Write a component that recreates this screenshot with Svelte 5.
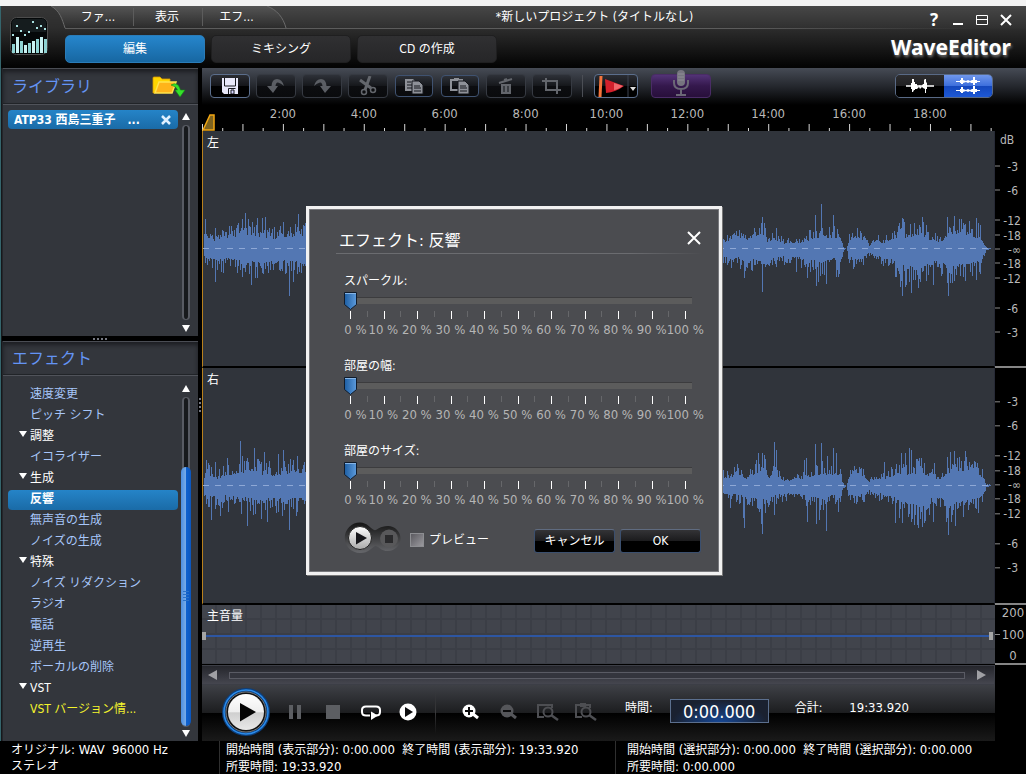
<script>
  const effects = [
    { name: '速度変更' },
    { name: 'ピッチ シフト' },
    { name: '調整', group: true },
    { name: 'イコライザー' },
    { name: '生成', group: true },
    { name: '反響', selected: true },
    { name: '無声音の生成' },
    { name: 'ノイズの生成' },
    { name: '特殊', group: true },
    { name: 'ノイズ リダクション' },
    { name: 'ラジオ' },
    { name: '電話' },
    { name: '逆再生' },
    { name: 'ボーカルの削除' },
    { name: 'VST', group: true },
    { name: 'VST バージョン情...', notice: true }
  ];

  const sliders = [
    { id: 'sparkle', name: 'スパークル:' },
    { id: 'width', name: '部屋の幅:' },
    { id: 'size', name: '部屋のサイズ:' }
  ];
  let values = $state([0, 0, 0]);
  let preview = $state(false);
  const steps = Array.from({ length: 11 }, (_, i) => i * 10);
  const sliderTicks = Array.from({ length: 21 }, (_, i) => i);

  const minute = 5.1;
  const rulerTicks = Array.from({ length: 40 }, (_, i) => i);
  const rulerLabels = [2, 4, 6, 8, 10, 12, 14, 16, 18];

  const db = [
    ['-3', -83], ['-6', -59], ['-12', -29], ['-18', -14], ['-∞', 0],
    ['-18', 14], ['-12', 29], ['-6', 59], ['-3', 83]
  ];
  const gap = '  ';
  const open = ' (';

  // Envelope points: [x, peak above centre, peak below centre]
  const envelope = [
    [0, 10, 8], [4, 15, 14], [10, 12, 13], [14, 9, 16], [22, 14, 13], [34, 15, 15], [44, 19, 16], [56, 16, 19],
    [68, 13, 17], [80, 15, 16], [100, 17, 17], [300, 15, 16], [518, 9, 8], [524, 10, 12], [536, 15, 12],
    [544, 9, 15], [552, 15, 14], [560, 21, 18], [565, 9, 20], [572, 13, 12], [582, 7, 10], [600, 8, 12],
    [612, 14, 16], [622, 16, 18], [630, 12, 12], [637, 15, 16], [641, 2, 2], [644, 0, 0], [647, 10, 10],
    [654, 15, 15], [664, 9, 9], [667, 4, 5], [674, 9, 9], [683, 8, 11], [690, 13, 14], [698, 16, 22],
    [706, 14, 24], [718, 18, 28], [728, 11, 18], [738, 9, 16], [746, 17, 26], [756, 20, 22], [764, 18, 21],
    [772, 15, 18], [778, 14, 16], [781, 8, 8], [784, 1, 1], [789, 1, 0]
  ];
  const leftUp = {
    2: 30, 12: 21, 28: 23, 35: 26, 39: 30, 42: 36, 46: 23, 49: 27, 54: 31, 59: 31, 62: 32, 66: 21, 71: 22, 80: 27, 87: 22, 92: 25, 95: 35,
    557: 21, 559: 26, 560: 32, 574: 21, 613: 34, 619: 45, 631: 34, 632: 23, 635: 20, 697: 26, 700: 31, 701: 30, 702: 27, 708: 25, 712: 26, 720: 32, 721: 27, 724: 24, 745: 32, 752: 33, 757: 30, 759: 30, 763: 25, 774: 31, 776: 26, 778: 24
  };
  const leftDown = {
    12: 33, 20: 24, 34: 24, 39: 28, 42: 23, 48: 36, 52: 29, 54: 29, 60: 25, 65: 24, 70: 21, 76: 21, 83: 24, 86: 47, 90: 33, 94: 25,
    529: 19, 542: 29, 543: 22, 560: 43, 574: 18, 594: 23, 605: 29, 614: 37, 616: 33, 624: 35, 634: 28, 636: 28, 652: 18, 693: 28, 698: 38, 700: 47, 703: 38, 709: 44, 718: 33, 724: 32, 731: 36, 746: 47, 752: 32, 761: 28, 763: 32, 774: 31, 778: 25
  };
  const rightUp = {
    3: 26, 12: 24, 24: 28, 37: 45, 39: 30, 44: 28, 51: 38, 55: 27, 61: 34, 66: 25, 75: 32, 80: 36, 87: 27, 94: 30,
    556: 33, 560: 33, 562: 31, 563: 27, 572: 44, 574: 36, 602: 26, 604: 28, 613: 42, 619: 43, 625: 30, 631: 38, 634: 33, 651: 15, 682: 24, 699: 33, 703: 33, 707: 38, 709: 36, 717: 28, 732: 23, 745: 29, 748: 34, 752: 35, 757: 29, 763: 35, 772: 25, 780: 17
  };
  const rightDown = {
    8: 34, 17: 30, 25: 26, 38: 28, 44: 40, 50: 29, 58: 33, 64: 36, 73: 27, 79: 30, 86: 44, 93: 30,
    528: 22, 541: 32, 542: 42, 559: 38, 560: 48, 563: 27, 572: 29, 605: 36, 614: 38, 617: 34, 624: 45, 636: 26, 652: 17, 693: 37, 700: 37, 709: 36, 712: 39, 718: 33, 731: 36, 744: 36, 746: 49, 753: 40, 761: 31, 774: 23
  };

  function buildWave(seed, up, down) {
    let state = seed;
    const random = () => {
      state = (state * 1103515245 + 12345) % 2147483648;
      return state / 2147483648;
    };
    let path = '';
    let k = 0;
    for (let x = 1; x < 789; x++) {
      while (k < envelope.length - 2 && envelope[k + 1][0] <= x) k++;
      const [x0, u0, d0] = envelope[k];
      const [x1, u1, d1] = envelope[k + 1];
      const t = (x - x0) / (x1 - x0);
      const u = up[x] ?? Math.round((u0 + (u1 - u0) * t) * (0.75 + random() ** 2 * 0.9));
      const d = down[x] ?? Math.round((d0 + (d1 - d0) * t) * (0.7 + random() ** 2 * 0.9));
      path += `M${x} ${118 - u}h1V${119 + d}h-1z`;
    }
    return path;
  }
  const tracks = [
    { name: '左', middle: '50%', path: buildWave(4711, leftUp, leftDown) },
    { name: '右', middle: '49.5%', path: buildWave(90125, rightUp, rightDown) }
  ];

  const logoBars = [9, 16, 12, 8, 10, 12, 14, 16, 14];
  const logoDots = [20, 29, 24, 20, 23, 33, 27, 29, 26];
</script>

<div class="window">
  <div class="strip"></div>
  <header>
    <svg class="curve" width="300" height="24" aria-hidden="true">
      <defs>
        <linearGradient id="tabfill" x1="0" y1="0" x2="0" y2="1">
          <stop offset="0" stop-color="#555" /><stop offset="1" stop-color="#2c2c2c" />
        </linearGradient>
      </defs>
      <path d="M0 0H50C59 5 61 13 64 22V24H0z" fill="#2b2b2b" opacity=".6" />
      <path d="M50 0C59 5 61 13 64 22H285C282 11 276 4 266 0z" fill="url(#tabfill)" />
      <path d="M50 0C59 5 61 13 64 22M285 22C282 11 276 4 266 0" fill="none" stroke="#6a6a6a" />
    </svg>
    <svg class="logo" width="38" height="38" viewBox="0 0 38 38" aria-hidden="true">
      <rect x=".5" y=".5" width="37" height="37" rx="6" fill="#050809" stroke="#4c4c4c" />
      <path d="M2 6Q2 2 6 2H32Q36 2 36 6V15H2z" fill="#151c1e" />
      {#each logoBars as h, i}
        <rect x={2 + i * 4} y={36 - h} width="3" height={h} fill={i % 2 ? '#c9f2f2' : '#8fd3d3'} />
        <rect x={2 + i * 4} y={37 - logoDots[i]} width="2" height="2" fill="#a8e0e0" />
      {/each}
    </svg>
    <div class="head">
      <div class="row1">
        <nav class="menu">
          <button>ファ...</button>
          <button>表示</button>
          <button>エフ...</button>
        </nav>
        <div class="title">*新しいプロジェクト (タイトルなし)</div>
        <div class="controls">
          <button class="help" aria-label="ヘルプ">?</button>
          <button aria-label="最小化"><svg width="14" height="14"><path d="M2 11h10" stroke="#fff" stroke-width="2" /></svg></button>
          <button aria-label="最大化"><svg width="14" height="14"><path d="M1.500 2.500h11v9h-11zM1.500 6.500h11" fill="none" stroke="#fff" /></svg></button>
          <button aria-label="閉じる"><svg width="14" height="14"><path d="M2 2l10 10M12 2L2 12" stroke="#fff" stroke-width="2" /></svg></button>
        </div>
      </div>
      <div class="row2">
        <button class="tab active">編集</button>
        <button class="tab">ミキシング</button>
        <button class="tab">CD の作成</button>
        <div class="brand">WaveEditor</div>
      </div>
    </div>
  </header>

  <div class="body">
    <aside>
      <section class="panel library">
        <div class="heading">
          <h2>ライブラリ</h2>
          <button class="folder" aria-label="ファイルを追加">
            <svg width="34" height="22" viewBox="0 0 34 22">
              <path d="M1 2q0-1 1-1h6l2 2h8v4H7L3 17H1z" fill="#ffd500" stroke="#d99a00" stroke-width=".8" />
              <path d="M7 6h17l-4 11H3z" fill="#ffb41a" stroke="#ffe34d" stroke-width="1.500" />
              <path d="M19 9q7-4 9.500 5h4.500l-5 7-5-7h2.500q-1.500-4-6.500-5z" fill="#35e02b" stroke="#128a12" stroke-width=".6" />
            </svg>
          </button>
        </div>
        <div class="content">
          <ul class="files">
            <li><span>ATP33 西島三重子</span><span class="more">...</span>
              <button aria-label="ファイルを閉じる"><svg width="12" height="12"><path d="M2 2l8 8M10 2l-8 8" stroke="#dff0ff" stroke-width="2.500" /></svg></button>
            </li>
          </ul>
          <div class="vscroll"><i class="up"></i><div class="rail"></div><i class="down"></i></div>
        </div>
      </section>
      <div class="split"><i></i><i></i><i></i><i></i></div>
      <section class="panel effects">
        <div class="heading"><h2>エフェクト</h2></div>
        <div class="content">
          <ul class="tree">
            {#each effects as e}
              <li class:group={e.group} class:selected={e.selected} class:notice={e.notice}>{e.name}</li>
            {/each}
          </ul>
          <div class="vscroll"><i class="up"></i><div class="rail"><div class="thumb"><b></b><b></b><b></b><b></b></div></div><i class="down"></i></div>
        </div>
      </section>
    </aside>
    <div class="vsplit"><i></i><i></i><i></i><i></i></div>

    <main>
      <div class="toolbar">
        <button class="tool on" aria-label="保存"><svg width="16" height="16"><path d="M0 0h16v16H2l-2-2z" fill="#e8e8fa" /><path d="M2.500 0v8h11V0M6.500 16v-5.500h7" fill="none" stroke="#14161c" /><path d="M9 12h3v4H9z" fill="#d5d5ff" stroke="#14161c" /></svg></button>
        <button class="tool" aria-label="元に戻す"><svg width="18" height="16"><path d="M17 8Q15 1 10 1Q5 1 4.500 8H0l6 7 5-7H8.500Q9 4 11 4.500Q14 5 17 8z" fill="#5b5e64" /></svg></button>
        <button class="tool" aria-label="やり直し"><svg width="18" height="16"><path d="M1 8Q3 1 8 1Q13 1 13.500 8H18l-6 7-5-7h2.500Q9 4 7 4.500Q4 5 1 8z" fill="#5b5e64" /></svg></button>
        <button class="tool" aria-label="切り取り"><svg width="18" height="20"><path d="M1 4L12 12M11 0L6 14" stroke="#63666c" stroke-width="3" /><circle cx="5" cy="16" r="2.500" fill="none" stroke="#63666c" stroke-width="1.500" /><circle cx="14" cy="14" r="2.500" fill="none" stroke="#63666c" stroke-width="1.500" /></svg></button>
        <button class="tool mid" aria-label="コピー"><svg width="19" height="16"><path d="M0 1h8l3 3v9H0z" fill="#8e9198" /><path d="M2 4h4M2 7h5M2 10h5" stroke="#15171c" /><path d="M7 3h7l4 4v9H7z" fill="#8e9198" stroke="#15171c" /><path d="M9 8h6M9 10h7M9 13h7" stroke="#15171c" /></svg></button>
        <button class="tool mid" aria-label="貼り付け"><svg width="20" height="16"><path d="M9 12H1V2h11v3" fill="none" stroke="#8e9198" stroke-width="2" /><path d="M4 0h5v3H4z" fill="#8e9198" /><path d="M8 3h7l4 4v9H8z" fill="#8e9198" stroke="#15171c" /><path d="M10 8h6M10 10h7M10 13h7" stroke="#15171c" /></svg></button>
        <button class="tool" aria-label="削除"><svg width="16" height="18"><path d="M1 6l13-4M6 3l3-1" stroke="#63666c" stroke-width="2" /><path d="M3 7h10v10H3z" fill="#63666c" /><path d="M6 9v6M10 9v6" stroke="#101216" /></svg></button>
        <button class="tool" aria-label="トリミング"><svg width="20" height="16"><path d="M4 0v12h15M0 3h15v13" fill="none" stroke="#63666c" stroke-width="2" /></svg></button>
        <span class="sep"></span>
        <button class="tool on flag" aria-label="マーカー"><svg width="40" height="22"><path d="M5 1L4 22" stroke="#f4743c" stroke-width="3" /><path d="M9 4L28 11q-8 6-18 7z" fill="#d2202c" /><path d="M18 8l9 3q-6 4-9 4z" fill="#f0686c" /><path d="M32 0v22" stroke="#3d4350" /><path d="M34 12h6l-3 4z" fill="#ddd" /></svg></button>
        <button class="tool mic" aria-label="録音"><svg width="18" height="28"><rect x="5" y="1" width="8" height="16" rx="4" fill="#76747f" /><path d="M6 5h6M6 8h6M6 11h6" stroke="#8f8d98" /><path d="M2 11v3q0 6 7 6t7-6v-3M9 20v5M4 26h10" fill="none" stroke="#6b6876" stroke-width="2" /></svg></button>
        <div class="views">
          <button aria-label="ミックス表示"><svg width="28" height="16"><path d="M0 8h28" stroke="#fff" stroke-width="1.500" /><path d="M5 5h1V1h2v3h1v2h2v1l1 2 2-2 1 2 2-3h1V2l1-1h1v3l1 1v6h-1v4h-1v-4l-2-1-1-1-2 2-1-2-2 2H9v1H8l-1 2H6v-3H5z" fill="#fff" /></svg></button>
          <button class="stereo" aria-label="ステレオ表示"><svg width="28" height="18">
            {#each [0, 9] as y}
              <path transform="translate(0 {y})" d="M2 4.500h24" stroke="#fff" />
              <path transform="translate(0 {y})" d="M6 3h1V1h2v2l3 1 2-1 2 1 2-1 1 0V0h2v3h2v3h-2v2h-2V6l-2 0-1-1-2 1-2-1-3 1v1H7V6H6z" fill="#fff" />
            {/each}
          </svg></button>
        </div>
      </div>

      <div class="canvas">
        <div class="ruler">
          <svg width="100%" height="26">
            {#each rulerTicks as i}
              <rect x="{i * minute / 2}%" y={i % 2 ? 23 : 19} width="1" height={i % 2 ? 3 : 7} fill="#d6d6d6" />
            {/each}
            {#each rulerLabels as m}
              <text x="{m * minute}%" y="13" text-anchor="middle">{m}:00</text>
            {/each}
            <path d="M1 25L8 10H12V25z" fill="#7d6320" stroke="#f3a712" stroke-width="1.500" />
          </svg>
        </div>
        <div class="corner"></div>

        {#each tracks as t, n}
          <div class="track">
            <span>{t.name}</span>
            <svg class="wave" viewBox="0 0 792 236" preserveAspectRatio="none" shape-rendering="crispEdges">
              <path d={t.path} fill="#5377b3" />
              <path d="M0 118.500H789" stroke="#8fa9d6" stroke-dasharray="6 6" />
            </svg>
          </div>
          <div class="scale">
            <svg width="31" height="100%">
              {#if n === 0}<text x="5" y="13">dB</text>{/if}
              {#each db as [label, offset]}
                <svg y={t.middle} overflow="visible">
                  <rect y={offset} width="5" height="1" fill="#8b8b8b" />
                  <text x={label.length > 2 || label === '-∞' ? 26 : 23} y={offset + 5} text-anchor="end">{label}</text>
                </svg>
              {/each}
            </svg>
          </div>
        {/each}

        <div class="volume">
          <span>主音量</span>
          <div class="level"><i></i><i></i></div>
        </div>
        <div class="scale vol"><em>200</em><em class="mark">100</em><em>0</em></div>

        <dialog open aria-labelledby="dlg">
          <div class="dtitle">
            <h1 id="dlg">エフェクト: 反響</h1>
            <button aria-label="閉じる"><svg width="16" height="16"><path d="M2 2l12 12M14 2L2 14" stroke="#fff" stroke-width="2" /></svg></button>
          </div>
          {#each sliders as s, i}
            <div class="param">
              <label for={s.id}>{s.name}</label>
              <input id={s.id} type="range" min="0" max="100" bind:value={values[i]} />
              <div class="ticks">
                {#each sliderTicks as k}<i class:minor={k % 2}></i>{/each}
              </div>
              <div class="nums">
                {#each steps as v}<span>{v} %</span>{/each}
              </div>
            </div>
          {/each}
          <div class="actions">
            <div class="player">
              <svg width="58" height="32" viewBox="0 0 58 32" aria-hidden="true">
                <defs><linearGradient id="silver" x1="0" y1="0" x2="0" y2="1"><stop offset="0" stop-color="#fff" /><stop offset="1" stop-color="#a9a9a9" /></linearGradient>
                <linearGradient id="well" x1="0" y1="0" x2="0" y2="1"><stop offset="0" stop-color="#141414" /><stop offset="1" stop-color="#66676b" /></linearGradient></defs>
                <path d="M16 .5C23 .5 26 6 30 8C33 9 35 4 44 4A12.500 12.500 0 0 1 44 29C36 29 34 23 31 24C27 26 25 31 16 31A15.200 15.200 0 0 1 16 .5z" fill="url(#well)" />
                <circle cx="45" cy="16.500" r="9" fill="#58585a" /><rect x="41" y="13" width="8" height="8" fill="#2a2a2c" />
                <circle cx="16" cy="16" r="11.500" fill="url(#silver)" stroke="#222" /><path d="M12 10l11 6-11 6.500z" fill="#17171b" />
              </svg>
              <button aria-label="再生"></button><button aria-label="停止"></button>
            </div>
            <label class="check"><input type="checkbox" bind:checked={preview} />プレビュー</label>
            <button class="dbtn">キャンセル</button>
            <button class="dbtn">OK</button>
          </div>
        </dialog>
      </div>

      <div class="hscroll"><i></i><div></div><i class="r"></i></div>

      <div class="transport">
        <button class="play" aria-label="再生"><svg width="52" height="52"><defs><linearGradient id="ball" x1="0" y1="0" x2="0" y2="1"><stop offset="0" stop-color="#fff" /><stop offset=".5" stop-color="#eee" /><stop offset=".52" stop-color="#cfcfcf" /><stop offset="1" stop-color="#e8e8e8" /></linearGradient></defs>
          <circle cx="26" cy="26" r="22" fill="#111" stroke="#0d3e7a" stroke-width="4" /><circle cx="26" cy="26" r="22" fill="none" stroke="#2a8bea" stroke-width="1.500" /><circle cx="26" cy="26" r="20" fill="none" stroke="#777" /><circle cx="26" cy="26" r="18" fill="url(#ball)" /><path d="M20 17l16 9-16 9.500z" fill="#050505" /></svg></button>
        <button class="pause" aria-label="一時停止"><svg width="12" height="14"><path d="M2 0v14M10 0v14" stroke="#5c5e62" stroke-width="4" /></svg></button>
        <button class="stop" aria-label="停止"><svg width="14" height="14"><path d="M0 0h14v14H0z" fill="#5c5e62" /></svg></button>
        <button class="loop" aria-label="ループ"><svg width="22" height="18"><path d="M10 12.500H6Q2 12.500 2 9V7Q2 3.500 6 3.500H16Q20 3.500 20 7V9Q20 12.500 16 12.500" fill="none" stroke="#fff" stroke-width="2" /><path d="M11 8.500l7 4-7 4.500z" fill="#fff" /></svg></button>
        <button class="from" aria-label="先頭から再生"><svg width="18" height="18"><circle cx="9" cy="9" r="8.500" fill="#fff" /><path d="M6 4l8 5-8 5z" fill="#0c0c0e" /></svg></button>
        <span class="tsep"></span>
        <button class="zin" aria-label="拡大"><svg width="17" height="16"><circle cx="7" cy="7" r="6.500" fill="#fff" /><path d="M11 10l5 4" stroke="#fff" stroke-width="3" /><path d="M3 7h8M7 3v8" stroke="#0b0b0c" stroke-width="2" /></svg></button>
        <button class="zout" aria-label="縮小"><svg width="17" height="16"><circle cx="7" cy="7" r="6.500" fill="#55565a" /><path d="M11 10l5 4" stroke="#55565a" stroke-width="3" /><path d="M3 7h8" stroke="#0b0b0c" stroke-width="2" /></svg></button>
        <button class="zsel" aria-label="選択範囲を拡大"><svg width="22" height="18"><path d="M7 14H1V2h14v3" fill="none" stroke="#4d4e52" stroke-width="2" /><circle cx="11" cy="9" r="4.500" fill="none" stroke="#4d4e52" stroke-width="2" /><path d="M14 12l7 5" stroke="#4d4e52" stroke-width="2.500" /></svg></button>
        <button class="zsel" aria-label="全体を表示"><svg width="22" height="18"><path d="M7 14H1V2h14v3M5 1.500h6" fill="none" stroke="#4d4e52" stroke-width="2" /><path d="M5 0h6v4H5z" fill="#4d4e52" /><circle cx="11" cy="9" r="4.500" fill="none" stroke="#4d4e52" stroke-width="2" /><path d="M14 12l7 5" stroke="#4d4e52" stroke-width="2.500" /></svg></button>
        <div class="times">
          <label for="pos">時間:</label>
          <input id="pos" type="text" value="0:00.000" />
          <span class="total">合計:</span>
          <span class="n">19:33.920</span>
        </div>
      </div>
    </main>
  </div>

  <footer>
    <div><p>オリジナル<span class="n">: WAV{gap}96000 Hz</span></p><p>ステレオ</p></div>
    <div><p>開始時間<span class="n">{open}</span>表示部分<span class="n">): 0:00.000{gap}</span>終了時間<span class="n">{open}</span>表示部分<span class="n">): 19:33.920</span></p><p>所要時間<span class="n">: 19:33.920</span></p></div>
    <div><p>開始時間<span class="n">{open}</span>選択部分<span class="n">): 0:00.000{gap}</span>終了時間<span class="n">{open}</span>選択部分<span class="n">): 0:00.000</span></p><p>所要時間<span class="n">: 0:00.000</span></p></div>
  </footer>
</div>

<style>
  :global(body) { margin: 0; background: #000; }
  .window, .window :global(*) { box-sizing: border-box; }
  .window {
    min-height: 100vh; display: flex; flex-direction: column; overflow: hidden;
    background: #000; color: #fff;
    font-size: 12px; line-height: 16px;
    font-family: "DejaVu Sans Condensed", "Noto Sans CJK JP", "Noto Sans", sans-serif;
  }
  button { font: inherit; color: inherit; background: none; border: 0; padding: 0; display: flex; align-items: center; justify-content: center; }
  svg { display: block; flex: none; }
  h1, h2, p, ul { margin: 0; padding: 0; font-weight: 400; list-style: none; }
  .n { font-size: 13px; }

  .strip { height: 6px; background: #f3f3f3; }
  header { position: relative; display: flex; height: 62px; padding-left: 9px; background: linear-gradient(#474747, #303030 22px, #2b2b2b 24px, #040404 60px); border-left: 1px solid #35656c; }
  .curve { position: absolute; left: 0; top: 0; }
  .logo { position: relative; margin-top: 11px; }
  .head { flex: 1; position: relative; display: flex; flex-direction: column; padding-left: 17px; }
  .row1 { display: flex; height: 23px; border-bottom: 1px solid #525252; border-image: linear-gradient(90deg, #5c5c5c 70%, transparent 95%) 1; }
  .menu { display: flex; padding: 2px 14px 2px 0; }
  .menu button { width: 69px; padding: 0 2px 0 0; border-right: 1px solid #5c5c5c; }
  .menu button:last-child { border: 0; }
  .title { flex: 1; text-align: center; line-height: 22px; padding-right: 24px; }
  .controls { display: flex; gap: 10px; padding: 6px 13px 0 0; }
  .controls button { width: 14px; height: 16px; }
  .controls .help { font-family: "Noto Sans", sans-serif; font-size: 17px; font-weight: 700; }
  .row2 { display: flex; gap: 6px; padding-top: 6px; }
  .tab { width: 140px; height: 28px; border-radius: 5px; background: linear-gradient(#303032, #262628); border: 1px solid #1f1f20; }
  .tab.active { background: linear-gradient(#2686cc, #1767a2); border-color: #2a7cb8; }
  .brand { flex: 1; text-align: right; padding: 0 15px 0 0; font: 700 21px/24px "Noto Sans", sans-serif; text-shadow: 1px 2px 3px #777; }

  .body { flex: 1; display: flex; background: #000; border-left: 1px solid #35656c; }
  aside { width: 197px; display: flex; flex-direction: column; border-left: 1px solid #16181b; }
  .panel { background: #33363c; display: flex; flex-direction: column; border-left: 1px solid #23262b; }
  .library { height: 268px; }
  .effects { flex: 1; }
  .heading { height: 37px; display: flex; justify-content: space-between; align-items: center; padding: 0 12px 0 9px; border-top: 1px solid #4a4d54; border-bottom: 1px solid #50535a; box-shadow: inset 0 3px 4px #1c1e22, inset 0 -1px #22252a; }
  .effects .heading { height: 35px; }
  .heading h2 { font-size: 16px; line-height: 24px; color: #6494f5; }
  .content { flex: 1; display: flex; }
  .files { flex: 1; padding: 5px 3px 0 5px; }
  .files li { height: 19px; display: flex; align-items: center; gap: 12px; padding: 0 6px; border-radius: 4px; background: linear-gradient(#2584c8, #1a6ba7); font-weight: 700; white-space: nowrap; }
  .files .more { flex: 1; }
  .tree { flex: 1; padding: 8px 3px 0 5px; }
  .tree li { position: relative; height: 21px; line-height: 21px; padding-left: 22px; color: #a7c6fa; white-space: nowrap; }
  .tree .group { color: #fff; }
  .tree .group::before { content: ""; position: absolute; left: 11px; top: 5px; border: 4px solid transparent; border-top: 6px solid #fff; border-bottom: 0; }
  .tree .selected { height: 20px; line-height: 18px; margin: 1px 0 0; border-radius: 4px; background: linear-gradient(#2584c8, #1a6ba7); color: #fff; font-weight: 700; }
  .tree .notice { color: #f4f42c; }
  .vscroll { width: 10px; margin-right: 7px; display: flex; flex-direction: column; align-items: center; padding: 8px 0 4px; }
  .vscroll i { border: 4px solid transparent; }
  .vscroll .up { border-bottom: 7px solid #fff; border-top: 0; }
  .vscroll .down { border-top: 7px solid #fff; border-bottom: 0; }
  .rail { flex: 1; width: 8px; margin: 5px 0; border: 2px solid #585b63; border-width: 1px 2px; border-radius: 5px; background: #17191c; }
  .effects .vscroll { padding-top: 9px; }
  .effects .rail { display: flex; flex-direction: column; justify-content: flex-end; align-items: center; margin-bottom: 3px; }
  .thumb { width: 10px; height: 79%; border-radius: 5px; background: linear-gradient(90deg, #4d8fe0, #74a9e8 45%, #0f62d0 50%, #0b56bd); display: flex; flex-direction: column; gap: 2px; justify-content: center; align-items: center; flex: none; }
  .thumb b { width: 6px; height: 1px; background: #2b72c9; }
  .split { height: 5px; display: flex; gap: 2px; justify-content: center; align-items: center; }
  .split i, .vsplit i { width: 2px; height: 2px; background: #767983; }
  .vsplit { width: 4px; display: flex; flex-direction: column; gap: 2px; align-items: center; justify-content: center; }

  main { flex: 1; min-width: 0; display: flex; flex-direction: column; }
  .toolbar { height: 37px; display: flex; align-items: center; gap: 6px; padding: 0 33px 2px 8px; background: linear-gradient(#464b55, #24272d 50%, #000); }
  .tool { width: 40px; height: 24px; border: 1px solid #363a42; border-radius: 4px; background: linear-gradient(#2e3138, #15171b 50%, #0c0d10 52%, #0a0b0d); }
  .tool.on { border-color: #5b6e8c; background: linear-gradient(#2b2d33, #15161a 48%, #000 50%); }
  .tool.mid { width: 38px; height: 22px; margin: 0 1px; border-color: #3f5270; }
  .tool.flag { width: 44px; margin-left: 5px; }
  .tool.mic { width: 60px; margin-left: 7px; border-color: #4a2c66; background: linear-gradient(#533377, #34184c 50%, #280f3b); }
  .mic svg { margin-top: -6px; }
  .sep { width: 1px; height: 22px; margin-left: 4px; background: #4b4e55; }
  .views { margin-left: auto; display: flex; border: 1px solid #596a86; border-radius: 5px; overflow: hidden; }
  .views button { width: 48px; height: 22px; background: linear-gradient(#2d2d2f, #202022 48%, #000 50%); }
  .views .stereo { background: linear-gradient(#7097ec, #3e70dd 48%, #1447bc 50%, #1d58d6); }

  .canvas { flex: 1; position: relative; display: grid; grid-template-columns: minmax(0, 1fr) 31px; grid-template-rows: 26px 1fr 1fr 60px; }
  .ruler text { font-size: 13px; fill: #b9b9b9; }
  .scale text { font-size: 12px; fill: #b9b9b9; }
  .track { position: relative; background: #30343b; border-left: 1px solid #b8801c; border-bottom: 2px solid #000; border-right: 1px solid #272a36; }
  .track span, .volume span { position: relative; display: block; padding: 4px; z-index: 1; }
  .wave { position: absolute; inset: 0; width: 100%; height: 100%; }
  .scale { position: relative; border-bottom: 2px solid #858585; overflow: hidden; }
  .scale > svg { position: absolute; inset: 0; }
  .volume { position: relative; border-bottom: 1px solid #000; background: repeating-linear-gradient(90deg, transparent 0 13px, #3b3e46 13px 15px), repeating-linear-gradient(transparent 0 13px, #3b3e46 13px 15px), #41444c; }
  .volume span { padding: 3px 5px; }
  .level { position: absolute; left: 0; right: 2px; top: 27px; height: 8px; display: flex; justify-content: space-between; background: linear-gradient(transparent 3px, #2d56a3 3px 5px, transparent 5px); }
  .level i { width: 4px; height: 8px; background: #a5a5a5; }
  .scale.vol { display: flex; flex-direction: column; justify-content: space-between; }
  .vol em { font-style: normal; font-size: 13px; line-height: 15px; color: #b9b9b9; text-align: center; padding-left: 5px; }
  .vol .mark { background: linear-gradient(#8b8b8b, #8b8b8b) 0 7px / 5px 1px no-repeat; }

  dialog { position: absolute; left: 104px; top: 101px; width: 416px; margin: 0; padding: 19px 18px 18px 26px; border: 3px solid #f1f1f1; background: #4b4c50; color: #fff; box-shadow: inset 1px 1px #77787c, inset -1px -1px #77787c, 1px 1px #777; z-index: 3; }
  .dtitle { height: 26px; display: flex; justify-content: space-between; margin: 0 -1px 19px 1px; padding: 0 0 0 3px; border-bottom: 1px solid; border-image: linear-gradient(90deg, #6b6c70 80%, transparent) 1; }
  .dtitle h1 { font-size: 16px; line-height: 26px; }
  .dtitle button { height: 20px; }
  .param { height: 85px; padding-left: 9px; }
  .param label { display: block; height: 18px; line-height: 16px; }
  .param input { appearance: none; display: block; width: 348px; height: 20px; margin: 0; background: linear-gradient(transparent 6px, #3c3c3e 6px 7px, #5c5c5c 7px 13px, transparent 13px); }
  .param input::-webkit-slider-thumb { appearance: none; width: 13px; height: 20px; background: url("data:image/svg+xml,%3Csvg xmlns='http://www.w3.org/2000/svg' width='13' height='20'%3E%3ClinearGradient id='a'%3E%3Cstop stop-color='%231d5ea3'/%3E%3Cstop offset='1' stop-color='%235d9bdc'/%3E%3C/linearGradient%3E%3Cpath d='M.5 1.500h12v12l-6 5-6-5z' fill='url(%23a)' stroke='%23101c2c'/%3E%3Cpath d='M1 2.500h11' stroke='%2386b5e6'/%3E%3C/svg%3E"); }
  .ticks { display: flex; justify-content: space-between; width: 336px; margin-left: 6px; height: 8px; }
  .ticks i { width: 1px; height: 8px; background: #fff; }
  .ticks .minor { height: 6px; background: #66676a; }
  .nums { display: flex; width: 369px; margin: 3px 0 0 -11px; color: #b5b5b5; font-size: 13px; line-height: 15px; white-space: nowrap; }
  .nums span { flex: 1 0 0; min-width: 0; display: flex; justify-content: center; }
  .nums span:first-child { justify-content: flex-end; }
  .actions { display: flex; align-items: center; padding-left: 9px; height: 33px; margin-top: -7px; }
  .player { position: relative; width: 58px; height: 32px; display: flex; }
  .player svg { position: absolute; inset: 0; }
  .player button { flex: 1; position: relative; }
  .check { display: flex; align-items: center; gap: 5px; margin: 4px auto 0 8px; white-space: nowrap; }
  .check input { appearance: none; width: 14px; height: 14px; margin: 0; border: 1px solid #8d8e92; background: linear-gradient(135deg, #5b5a60, #9a999e); }
  .dbtn { width: 81px; height: 24px; margin: 6px 0 0 5px; border: 1px solid #3b4f6e; border-top-color: #5f6b80; border-radius: 3px; background: linear-gradient(#333336, #1c1c1e 48%, #000 50%); white-space: nowrap; }

  .hscroll { height: 20px; margin-right: 31px; display: flex; align-items: center; justify-content: space-between; padding: 0 8px 0 6px; border: 1px solid #3c3e46; border-left: 0; background: linear-gradient(#25262c, #45464f); }
  .hscroll div { flex: 1; height: 7px; margin: 0 12px; border: 1px solid #5a5b64; background: #34353d; }
  .hscroll i { border: 5px solid transparent; border-right: 9px solid #a0a0a4; border-left: 0; }
  .hscroll .r { border-left: 9px solid #a0a0a4; border-right: 0; }
  .transport { height: 56px; margin-right: 31px; display: flex; align-items: center; padding: 0 0 3px 18px; background: linear-gradient(#3e4046, #1c1d1f 28px, #000 28px, #1a1a1a); }
  .play { margin-right: 17px; }
  .pause { margin-right: 25px; }
  .stop { margin-right: 20px; }
  .loop { margin-right: 17px; }
  .from { margin-right: 18px; }
  .tsep { width: 1px; height: 44px; margin-right: 26px; background: linear-gradient(transparent, #3a3a3c, transparent); }
  .zin { margin-right: 21px; }
  .zout { margin-right: 20px; }
  .zsel + .zsel { margin-left: 16px; }
  .times { display: flex; align-items: center; margin-left: 28px; padding-bottom: 7px; white-space: nowrap; }
  .times input { width: 99px; height: 24px; margin: 6px 26px 0 17px; padding: 0; border: 1px solid #5b6f8e; background: radial-gradient(ellipse at 50% 110%, #164a9c, #1a2130 70%); color: #fff; font-family: inherit; font-size: 18px; line-height: 22px; text-align: center; }
  .total { margin-right: 27px; }

  footer { height: 33px; overflow: hidden; display: grid; grid-template-columns: 219px 396px 1fr; background: #000; line-height: 17px; white-space: pre; }
  footer div { padding-left: 11px; }
  footer div + div { padding-left: 6px; border-left: 1px solid #2f2f2f; }
  footer div:last-child { padding-left: 11px; }
  footer p { height: 17px; }
</style>
